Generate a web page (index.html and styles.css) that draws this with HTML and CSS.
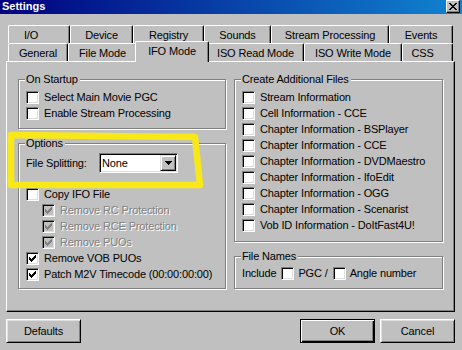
FILE: index.html
```html
<!DOCTYPE html>
<html>
<head>
<meta charset="utf-8">
<title>Settings</title>
<link rel="stylesheet" href="styles.css">
</head>
<body>
<div class="window">
  <div class="titlebar">
    <span class="title">Settings</span>
    <span class="close"><svg class="xglyph" width="8" height="7" viewBox="0 0 8 7"><path d="M0 0h2v1h-2z M6 0h2v1h-2z M1 1h2v1h-2z M5 1h2v1h-2z M2 2h4v1h-4z M3 3h2v1h-2z M2 4h4v1h-4z M1 5h2v1h-2z M5 5h2v1h-2z M0 6h2v1h-2z M6 6h2v1h-2z"/></svg></span>
  </div>
  <div class="body">
    <div class="tabrow">
      <div class="tab w62 io">I/O</div>
      <div class="tab w63">Device</div>
      <div class="tab w71">Registry</div>
      <div class="tab w67">Sounds</div>
      <div class="tab w118">Stream Processing</div>
      <div class="tab w64">Events</div>
    </div>
    <div class="tabrow">
      <div class="tab w60">General</div>
      <div class="tab w69">File Mode</div>
      <div class="tab w70 selected">IFO Mode</div>
      <div class="tab w97">ISO Read Mode</div>
      <div class="tab w98">ISO Write Mode</div>
      <div class="tab w51 css">CSS</div>
    </div>
    <div class="panel">
      <div class="col left">
        <div class="group startup">
          <div class="caption">On Startup</div>
          <div class="rows">
            <div class="check"><span class="box"></span><span class="text">Select Main Movie PGC</span></div>
            <div class="check"><span class="box"></span><span class="text">Enable Stream Processing</span></div>
          </div>
        </div>
        <div class="group options">
          <div class="caption">Options</div>
          <div class="comborow">
            <span class="label">File Splitting:</span>
            <div class="combo">
              <span class="value">None</span>
              <span class="drop"><svg width="7" height="4" viewBox="0 0 7 4"><path d="M0 0h7v1h-1v1h-1v1h-1v1h-1v-1h-1v-1h-1v-1h-1z"/></svg></span>
            </div>
          </div>
          <div class="rows gapped">
            <div class="check"><span class="box"></span><span class="text">Copy IFO File</span></div>
            <div class="check indent disabled"><span class="box"><svg class="tick" width="7" height="7" viewBox="0 0 7 7"><path d="M6 0h1v1h-1z M5 1h2v1h-2z M0 2h1v1h-1z M4 2h3v1h-3z M0 3h2v1h-2z M3 3h3v1h-3z M0 4h5v1h-5z M1 5h3v1h-3z M2 6h1v1h-1z"/></svg></span><span class="text">Remove RC Protection</span></div>
            <div class="check indent disabled"><span class="box"><svg class="tick" width="7" height="7" viewBox="0 0 7 7"><path d="M6 0h1v1h-1z M5 1h2v1h-2z M0 2h1v1h-1z M4 2h3v1h-3z M0 3h2v1h-2z M3 3h3v1h-3z M0 4h5v1h-5z M1 5h3v1h-3z M2 6h1v1h-1z"/></svg></span><span class="text">Remove RCE Protection</span></div>
            <div class="check indent disabled"><span class="box"><svg class="tick" width="7" height="7" viewBox="0 0 7 7"><path d="M6 0h1v1h-1z M5 1h2v1h-2z M0 2h1v1h-1z M4 2h3v1h-3z M0 3h2v1h-2z M3 3h3v1h-3z M0 4h5v1h-5z M1 5h3v1h-3z M2 6h1v1h-1z"/></svg></span><span class="text">Remove PUOs</span></div>
            <div class="check"><span class="box"><svg class="tick" width="7" height="7" viewBox="0 0 7 7"><path d="M6 0h1v1h-1z M5 1h2v1h-2z M0 2h1v1h-1z M4 2h3v1h-3z M0 3h2v1h-2z M3 3h3v1h-3z M0 4h5v1h-5z M1 5h3v1h-3z M2 6h1v1h-1z"/></svg></span><span class="text">Remove VOB PUOs</span></div>
            <div class="check"><span class="box"><svg class="tick" width="7" height="7" viewBox="0 0 7 7"><path d="M6 0h1v1h-1z M5 1h2v1h-2z M0 2h1v1h-1z M4 2h3v1h-3z M0 3h2v1h-2z M3 3h3v1h-3z M0 4h5v1h-5z M1 5h3v1h-3z M2 6h1v1h-1z"/></svg></span><span class="text">Patch M2V Timecode (00:00:00:00)</span></div>
          </div>
        </div>
      </div>
      <div class="col right">
        <div class="group additional">
          <div class="caption">Create Additional Files</div>
          <div class="rows">
            <div class="check"><span class="box"></span><span class="text">Stream Information</span></div>
            <div class="check"><span class="box"></span><span class="text">Cell Information - CCE</span></div>
            <div class="check"><span class="box"></span><span class="text">Chapter Information - BSPlayer</span></div>
            <div class="check"><span class="box"></span><span class="text">Chapter Information - CCE</span></div>
            <div class="check"><span class="box"></span><span class="text">Chapter Information - DVDMaestro</span></div>
            <div class="check"><span class="box"></span><span class="text">Chapter Information - IfoEdit</span></div>
            <div class="check"><span class="box"></span><span class="text">Chapter Information - OGG</span></div>
            <div class="check"><span class="box"></span><span class="text">Chapter Information - Scenarist</span></div>
            <div class="check"><span class="box"></span><span class="text">Vob ID Information - DoItFast4U!</span></div>
          </div>
        </div>
        <div class="group filenames">
          <div class="caption">File Names</div>
          <div class="inline">
            <span class="text plain">Include</span>
            <span class="box"></span>
            <span class="text">PGC /</span>
            <span class="box"></span>
            <span class="text">Angle number</span>
          </div>
        </div>
      </div>
    </div>
    <div class="buttons">
      <div class="btn defaults">Defaults</div>
      <div class="btn default">OK</div>
      <div class="btn">Cancel</div>
    </div>
  </div>
  <svg class="marker" width="462" height="350" viewBox="0 0 462 350"><path d="M11 135 L195 137 L200 185 L11 185 Z" fill="none" stroke="#f9e818" stroke-width="6.5" stroke-linejoin="round"/></svg>
</div>
</body>
</html>
```

FILE: styles.css
```css
* { box-sizing: border-box; }
html, body { margin: 0; padding: 0; }
body {
  width: 462px;
  height: 350px;
  overflow: hidden;
  background: #c0c0c0;
  font-family: "Liberation Sans", Arial, sans-serif;
  font-size: 11px;
  color: #000;
  letter-spacing: -0.15px;
}
.window {
  position: relative;
  width: 462px;
  height: 350px;
  background: #c0c0c0;
}
.titlebar {
  display: flex;
  align-items: flex-start;
  height: 14px;
  padding: 0 2px;
  background: linear-gradient(to right, #000080, #1084d0);
}
.title {
  color: #fff;
  font-weight: bold;
  line-height: 13px;
  letter-spacing: 0;
}
.close {
  margin-left: auto;
  width: 14px;
  height: 13px;
  display: flex;
  align-items: center;
  justify-content: center;
  background: #c0c0c0;
  border: 1px solid;
  border-color: #fff #000 #000 #fff;
  box-shadow: inset -1px -1px #808080;
}
.xglyph { display: block; fill: #000; }
.body { padding: 11px 7px 0 6px; }

.tabrow { display: flex; height: 18px; padding-left: 2px; }
.tab {
  flex: none;
  height: 18px;
  padding-top: 3px;
  line-height: 13px;
  text-align: center;
  white-space: nowrap;
  background: #c0c0c0;
  border-top: 1px solid #fff;
  border-left: 1px solid #fff;
  border-right: 1px solid #000;
  border-radius: 2px 2px 0 0;
  box-shadow: inset -1px 0 #808080;
}
.tab.io { padding-right: 16px; }
.tab.css { padding-right: 10px; }
.tab.selected {
  position: relative;
  z-index: 1;
  height: 21px;
  margin: -2px -2px 0;
}
.w51 { width: 51px; }
.w60 { width: 60px; }
.w62 { width: 62px; }
.w63 { width: 63px; }
.w64 { width: 64px; }
.w67 { width: 67px; }
.w69 { width: 69px; }
.w70 { width: 70px; }
.w71 { width: 71px; }
.w97 { width: 97px; }
.w98 { width: 98px; }
.w118 { width: 118px; }
.tab.selected.w70 { width: 74px; }

.panel {
  display: flex;
  gap: 8px;
  height: 251px;
  padding: 17px 0 0 11px;
  border: 1px solid;
  border-color: #fff #000 #000 #fff;
  box-shadow: inset -1px -1px #808080;
}
.col.left { width: 208px; }
.col.right { width: 209px; }

.group {
  border: 1px solid #808080;
  box-shadow: inset 1px 1px #fff, 1px 1px #fff;
  padding: 0 6px 6px 7px;
}
.group.options, .group.filenames { margin-top: 14px; }
.group.options { padding-bottom: 5px; }
.group.additional { padding-bottom: 7px; }
.caption {
  width: fit-content;
  margin: -7px 0 0 -1px;
  padding: 0 2px 0 1px;
  line-height: 13px;
  background: #c0c0c0;
  white-space: nowrap;
}
.rows { margin-top: 4px; }
.rows.gapped { margin-top: 14px; }
.check {
  display: flex;
  align-items: flex-start;
  height: 16px;
}
.check.indent { padding-left: 16px; }
.box {
  flex: none;
  width: 13px;
  height: 13px;
  margin-top: 1px;
  background: #fff;
  border: 1px solid;
  border-color: #808080 #fff #fff #808080;
  box-shadow: inset 1px 1px #000, inset -1px -1px #dfdfdf;
}
.tick { display: block; margin: 2px; fill: #000; }
.text {
  margin-left: 5px;
  padding-top: 1px;
  line-height: 13px;
  white-space: nowrap;
}
.disabled .box { background: #c0c0c0; }
.disabled .tick { fill: #808080; }
.disabled .text { color: #808080; text-shadow: 1px 1px 0 #fff; }

.comborow {
  display: flex;
  align-items: center;
  height: 20px;
  margin-top: 3px;
}
.label { width: 73px; line-height: 13px; white-space: nowrap; }
.combo {
  display: flex;
  width: 79px;
  height: 20px;
  padding: 1px;
  background: #fff;
  border: 1px solid;
  border-color: #808080 #fff #fff #808080;
  box-shadow: inset 1px 1px #000, inset -1px -1px #dfdfdf;
}
.value { flex: 1; padding-left: 1px; line-height: 16px; }
.drop {
  width: 16px;
  height: 16px;
  display: flex;
  align-items: center;
  justify-content: center;
  background: #c0c0c0;
  border: 1px solid;
  border-color: #dfdfdf #000 #000 #dfdfdf;
  box-shadow: inset 1px 1px #fff, inset -1px -1px #808080;
}
.drop svg { display: block; fill: #000; }

.inline {
  display: flex;
  align-items: flex-start;
  height: 16px;
  margin-top: 3px;
}
.inline .box { margin-left: 5px; }
.inline .text { margin-left: 4px; }
.inline .text.plain { margin-left: 0; }

.buttons {
  display: flex;
  gap: 5px;
  margin-top: 7px;
}
.btn {
  width: 75px;
  height: 24px;
  display: flex;
  align-items: center;
  justify-content: center;
  line-height: 13px;
  background: #c0c0c0;
  border: 1px solid;
  border-color: #fff #000 #000 #fff;
  box-shadow: inset 1px 1px #dfdfdf, inset -1px -1px #808080;
}
.btn.defaults { margin-right: auto; }
.btn.default {
  border-color: #000;
  box-shadow: inset 1px 1px #fff, inset -1px -1px #000, inset -2px -2px #808080;
}

.marker {
  position: absolute;
  left: 0;
  top: 0;
  pointer-events: none;
}
```
